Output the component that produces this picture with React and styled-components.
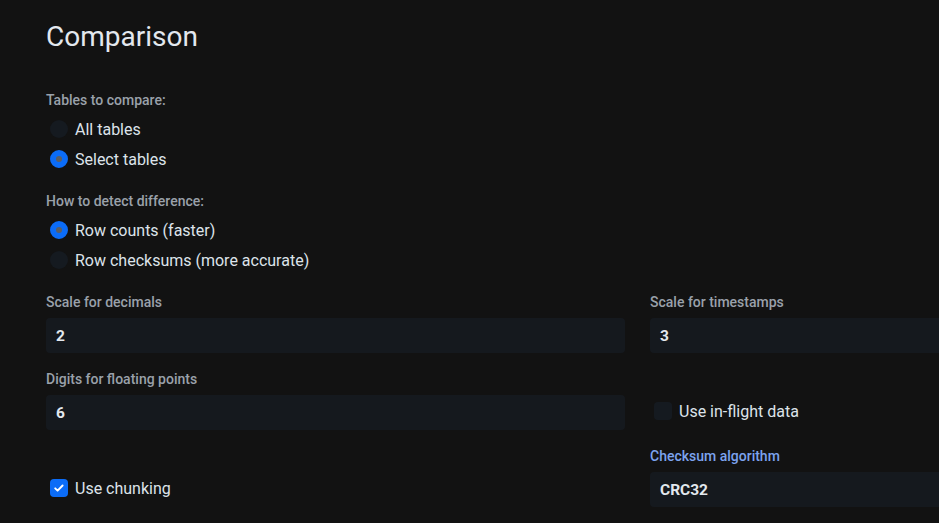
import React from "react";
import styled, { createGlobalStyle } from "styled-components";

const Global = createGlobalStyle`
  html, body {
    margin: 0;
    padding: 0;
    background: #121212;
    overflow: hidden;
  }
  body {
    font-family: Roboto, "Noto Sans", sans-serif;
    color: #dde3ea;
  }
`;

const Page = styled.div`
  padding: 18px 0 0 46px;
  width: 1183px;
`;

const Title = styled.h1`
  margin: 0 0 35px;
  font-size: 28px;
  font-weight: 400;
  line-height: 38px;
  color: #e3e8ee;
`;

const GroupLabel = styled.div`
  font-size: 14px;
  font-weight: 500;
  color: #9aa1aa;
  line-height: 18px;
  margin-bottom: 5px;
`;

const RadioGroup = styled.div`
  display: flex;
  flex-direction: column;
  margin-bottom: 18px;
`;

const Option = styled.label`
  display: flex;
  align-items: center;
  gap: 7px;
  height: 30px;
  padding-left: 4px;
  font-size: 16px;
  color: #dde3ea;
`;

const RadioDot = styled.span`
  width: 18px;
  height: 18px;
  border-radius: 50%;
  box-sizing: border-box;
  background: ${(p) => (p.checked ? "#5a5f66" : "#151a20")};
  border: ${(p) => (p.checked ? "6px solid #0b6cf7" : "none")};
`;

const Box = styled.span`
  width: 18px;
  height: 18px;
  border-radius: 4px;
  display: flex;
  align-items: center;
  justify-content: center;
  background: ${(p) => (p.checked ? "#0b6cf7" : "#151a20")};
`;

const Grid = styled.div`
  display: grid;
  grid-template-columns: 579px 579px;
  column-gap: 25px;
  row-gap: 17px;
`;

const Field = styled.div`
  display: flex;
  flex-direction: column;
`;

const FieldLabel = styled.div`
  font-size: 14px;
  font-weight: 500;
  line-height: 18px;
  margin-bottom: 7px;
  color: ${(p) => (p.active ? "#7ca3ee" : "#9aa1aa")};
`;

const Input = styled.div`
  height: 35px;
  box-sizing: border-box;
  padding: 0 10px;
  display: flex;
  align-items: center;
  background: #15191e;
  border-radius: 4px;
  font-size: 15.5px;
  font-weight: 700;
  color: #e3e8ee;
`;

const CheckRow = styled.div`
  display: flex;
  align-items: flex-end;
  padding-bottom: 4px;
`;

const Radio = ({ checked, children }) => (
  <Option>
    <RadioDot checked={checked} />
    {children}
  </Option>
);

const Check = ({ checked, children }) => (
  <Option>
    <Box checked={checked}>
      {checked && (
        <svg width="12" height="12" viewBox="0 0 12 12">
          <path d="M2.2 6.3l2.4 2.4 5-5.2" fill="none" stroke="#fff" strokeWidth="1.9" strokeLinecap="round" strokeLinejoin="round" />
        </svg>
      )}
    </Box>
    {children}
  </Option>
);

export default function App() {
  return (
    <Page>
      <Global />
      <Title>Comparison</Title>
      <GroupLabel>Tables to compare:</GroupLabel>
      <RadioGroup>
        <Radio>All tables</Radio>
        <Radio checked>Select tables</Radio>
      </RadioGroup>
      <GroupLabel>How to detect difference:</GroupLabel>
      <RadioGroup>
        <Radio checked>Row counts (faster)</Radio>
        <Radio>Row checksums (more accurate)</Radio>
      </RadioGroup>
      <Grid>
        <Field>
          <FieldLabel>Scale for decimals</FieldLabel>
          <Input>2</Input>
        </Field>
        <Field>
          <FieldLabel>Scale for timestamps</FieldLabel>
          <Input>3</Input>
        </Field>
        <Field>
          <FieldLabel>Digits for floating points</FieldLabel>
          <Input>6</Input>
        </Field>
        <CheckRow>
          <Check>Use in-flight data</Check>
        </CheckRow>
        <CheckRow>
          <Check checked>Use chunking</Check>
        </CheckRow>
        <Field>
          <FieldLabel active>Checksum algorithm</FieldLabel>
          <Input>CRC32</Input>
        </Field>
      </Grid>
    </Page>
  );
}
